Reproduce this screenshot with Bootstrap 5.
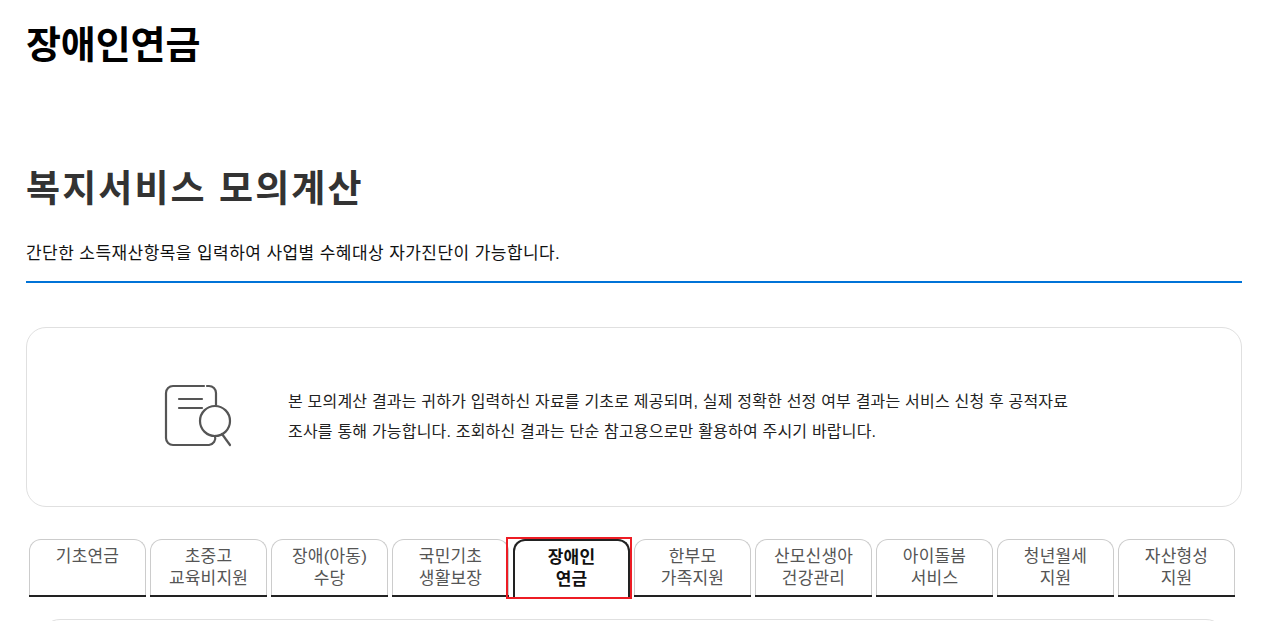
<!DOCTYPE html>
<html lang="ko">

<head>
    <meta charset="UTF-8" />
    <meta name="viewport" content="width=device-width, initial-scale=1.0" />
    <title>장애인연금</title>
    <link href="https://cdn.jsdelivr.net/npm/bootstrap@5.3.5/dist/css/bootstrap.min.css" rel="stylesheet" />
    <style>
        html, body { height: 621px; overflow: hidden; }
        body { font-family: "Liberation Sans", "Noto Sans CJK KR", sans-serif; color: #222; background: #fff; }
        .page-wrap { padding: 0 19px 0 26px; height: 621px; overflow: hidden; }
        .page-name { font-size: 38px; font-weight: 700; line-height: 50px; letter-spacing: -0.1px; color: #000; margin: 20px 0 0; }
        .sim-title { font-size: 37px; font-weight: 700; line-height: 50px; color: #333; margin: 95px 0 0; letter-spacing: 2.1px; }
        .sim-desc { font-size: 17px; line-height: 24px; letter-spacing: .43px; color: #111; margin: 0; padding: 26.5px 0 15.5px; border-bottom: 2px solid #0073d7; }
        .notice-box { height: 180px; margin-top: 44px; border: 1px solid #e0e0e0; border-radius: 20px; padding-left: 137px; gap: 54px; }
        .notice-text { font-size: 16px; line-height: 30px; letter-spacing: .2px; color: #222; margin: 0; }
        .sim-tabs { padding: 32px 7px 0 3px; gap: 4px; }
        .sim-tab { width: 117px; height: 58px; padding-top: 6px; border: 1px solid #ccc; border-bottom: 0; border-radius: 12px 12px 0 0; font-size: 17px; line-height: 22px; letter-spacing: .2px; color: #555; text-align: center; text-decoration: none; position: relative; }
        .sim-tab::before { content: ""; position: absolute; left: -1px; right: -1px; bottom: 0; height: 2px; background: #222; }
        .sim-tab.is-current { border: 2px solid #222; border-bottom: 0; padding-top: 6px; color: #111; font-weight: 700; }
        .sim-tab.is-current::before { display: none; }
        .sim-tab.is-current::after { content: ""; position: absolute; left: -9px; right: -4px; top: -4px; bottom: -2px; border: 2px solid #ed1c24; }
        .next-box { height: 60px; margin: 22px 16px 0 14px; border: 1px solid #e0e0e0; border-radius: 20px; }
    </style>
</head>

<body>
    <div class="page-wrap">
        <h1 class="page-name">장애인연금</h1>
        <h2 class="sim-title">복지서비스 모의계산</h2>
        <p class="sim-desc">간단한 소득재산항목을 입력하여 사업별 수혜대상 자가진단이 가능합니다.</p>

        <div class="notice-box d-flex align-items-center">
            <svg width="70" height="66" viewBox="0 0 70 66" fill="none" stroke="#555" stroke-width="2.2" stroke-linecap="round">
                <path d="M2 9a7 7 0 0 1 7-7h31M43 2h2a7 7 0 0 1 7 7v12M2 9v45a7 7 0 0 0 7 7h36a7 7 0 0 0 6-9" />
                <path d="M15 15h23M15 24h23" />
                <circle cx="51" cy="37" r="15" />
                <path d="M58 50l8 11" />
            </svg>
            <p class="notice-text">본 모의계산 결과는 귀하가 입력하신 자료를 기초로 제공되며, 실제 정확한 선정 여부 결과는 서비스 신청 후 공적자료<br />조사를 통해 가능합니다. 조회하신 결과는 단순 참고용으로만 활용하여 주시기 바랍니다.</p>
        </div>

        <div class="sim-tabs d-flex">
            <a class="sim-tab" href="#">기초연금</a>
            <a class="sim-tab" href="#">초중고<br />교육비지원</a>
            <a class="sim-tab" href="#">장애(아동)<br />수당</a>
            <a class="sim-tab" href="#">국민기초<br />생활보장</a>
            <a class="sim-tab is-current" href="#">장애인<br />연금</a>
            <a class="sim-tab" href="#">한부모<br />가족지원</a>
            <a class="sim-tab" href="#">산모신생아<br />건강관리</a>
            <a class="sim-tab" href="#">아이돌봄<br />서비스</a>
            <a class="sim-tab" href="#">청년월세<br />지원</a>
            <a class="sim-tab" href="#">자산형성<br />지원</a>
        </div>

        <div class="next-box"></div>
    </div>

    <script src="https://cdn.jsdelivr.net/npm/bootstrap@5.3.5/dist/js/bootstrap.bundle.min.js"></script>
</body>

</html>
